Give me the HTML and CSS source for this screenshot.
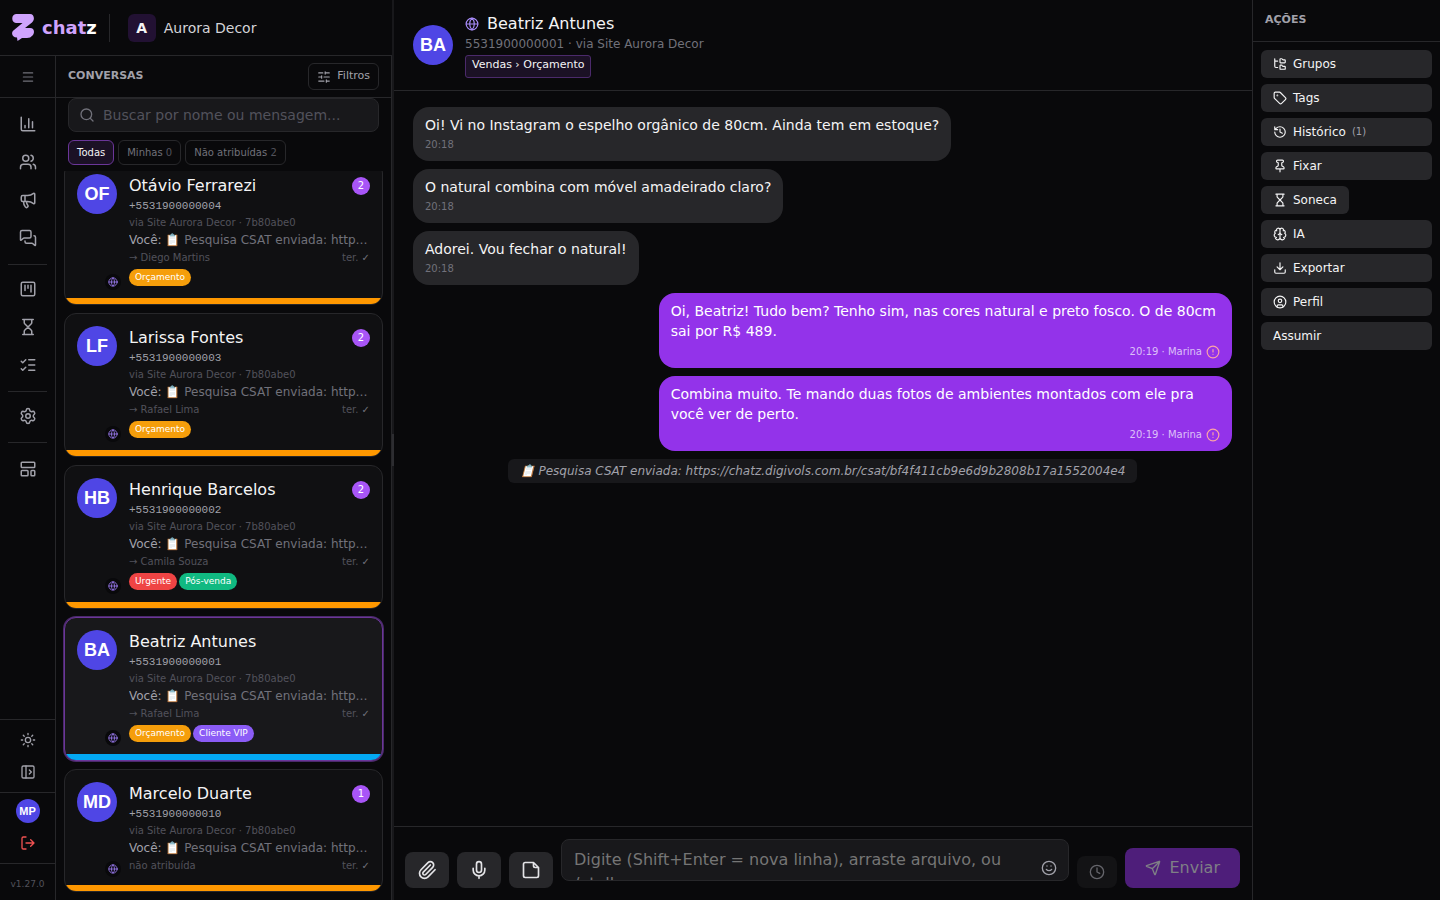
FILE: index.html
```html
<!DOCTYPE html>
<html lang="pt-BR">
<head>
<meta charset="utf-8">
<title>chatz</title>
<link rel="stylesheet" href="styles.css">
</head>
<body>
<svg class="sprite" aria-hidden="true">
  <symbol id="globe" viewBox="0 0 24 24"><circle cx="12" cy="12" r="10"/><path d="M12 2a14.5 14.5 0 0 0 0 20 14.5 14.5 0 0 0 0-20M2 12h20"/></symbol>
  <symbol id="hourglass" viewBox="0 0 24 24"><path d="M5 22h14M5 2h14M17 22v-4.172a2 2 0 0 0-.586-1.414L12 12l-4.414 4.414A2 2 0 0 0 7 17.828V22M7 2v4.172a2 2 0 0 0 .586 1.414L12 12l4.414-4.414A2 2 0 0 0 17 6.172V2"/></symbol>
  <symbol id="alert" viewBox="0 0 24 24"><circle cx="12" cy="12" r="10"/><path d="M12 8v4M12 16h.01"/></symbol>
</svg>
<div class="app">
  <section class="left">
    <header class="brand">
      <svg class="logo" viewBox="0 0 22 27"><path d="M4 0H18C22.500 0 23 6 20 8.500L13 14H18C22.500 14 23 18.500 20.500 21.500Q18.500 24 15 24H10L5.500 27L5 23.500C0 23.500-1.500 18.500 2 16L10.500 9H4C-1 9-1 0 4 0Z" fill="#cfa3fd"/></svg>
      <span class="wordmark">chat<b>z</b></span>
      <span class="brand-line"></span>
      <span class="org-mark">A</span>
      <span class="org">Aurora Decor</span>
    </header>
    <div class="left-body">
      <nav class="rail" aria-label="Principal">
        <button class="menu" aria-label="Menu"><svg class="i14" viewBox="0 0 24 24"><path d="M4 5h16M4 12h16M4 19h16"/></svg></button>
        <div class="rail-main">
          <a href="#" aria-label="Relatórios"><svg class="i18" viewBox="0 0 24 24"><path d="M3 3v16a2 2 0 0 0 2 2h16M18 17V9M13 17V5M8 17v-3"/></svg></a>
          <a href="#" aria-label="Contatos"><svg class="i18" viewBox="0 0 24 24"><path d="M16 21v-2a4 4 0 0 0-4-4H6a4 4 0 0 0-4 4v2M16 3.128a4 4 0 0 1 0 7.744M22 21v-2a4 4 0 0 0-3-3.87"/><circle cx="9" cy="7" r="4"/></svg></a>
          <a href="#" aria-label="Campanhas"><svg class="i18" viewBox="0 0 24 24"><path d="M11 6a13 13 0 0 0 8.4-2.8A1 1 0 0 1 21 4v12a1 1 0 0 1-1.6.8A13 13 0 0 0 11 14H5a2 2 0 0 1-2-2V8a2 2 0 0 1 2-2zM6 14a12 12 0 0 0 2.4 7.2 2 2 0 0 0 3.2-2.4A8 8 0 0 1 10 14M8 6v8"/></svg></a>
          <a href="#" aria-label="Conversas"><svg class="i18" viewBox="0 0 24 24"><path d="M16 10a2 2 0 0 1-2 2H6.828a2 2 0 0 0-1.414.586l-2.202 2.202A.71.71 0 0 1 2 14.286V4a2 2 0 0 1 2-2h10a2 2 0 0 1 2 2zM20 9a2 2 0 0 1 2 2v10.286a.71.71 0 0 1-1.212.502l-2.202-2.202A2 2 0 0 0 17.172 19H10a2 2 0 0 1-2-2v-1"/></svg></a>
          <hr>
          <a href="#" aria-label="Kanban"><svg class="i18" viewBox="0 0 24 24"><rect x="3" y="3" width="18" height="18" rx="2"/><path d="M8 7v7M12 7v4M16 7v9"/></svg></a>
          <a href="#" aria-label="Sonecas"><svg class="i18"><use href="#hourglass"/></svg></a>
          <a href="#" aria-label="Tarefas"><svg class="i18" viewBox="0 0 24 24"><path d="M13 5h8M13 12h8M13 19h8M3 17l2 2 4-4M3 7l2 2 4-4"/></svg></a>
          <hr>
          <a href="#" aria-label="Configurações"><svg class="i18" viewBox="0 0 24 24"><path d="M9.671 4.136a2.34 2.34 0 0 1 4.659 0 2.34 2.34 0 0 0 3.319 1.915 2.34 2.34 0 0 1 2.33 4.033 2.34 2.34 0 0 0 0 3.831 2.34 2.34 0 0 1-2.33 4.033 2.34 2.34 0 0 0-3.319 1.915 2.34 2.34 0 0 1-4.659 0 2.34 2.34 0 0 0-3.32-1.915 2.34 2.34 0 0 1-2.33-4.033 2.34 2.34 0 0 0 0-3.831A2.34 2.34 0 0 1 6.35 6.051a2.34 2.34 0 0 0 3.319-1.915"/><circle cx="12" cy="12" r="3"/></svg></a>
          <hr class="last">
          <a href="#" aria-label="Modelos"><svg class="i18" viewBox="0 0 24 24"><rect x="3" y="3" width="18" height="7" rx="1"/><rect x="3" y="14" width="9" height="7" rx="1"/><rect x="16" y="14" width="5" height="7" rx="1"/></svg></a>
        </div>
        <div class="rail-group">
          <button aria-label="Tema"><svg class="i16" viewBox="0 0 24 24"><circle cx="12" cy="12" r="4"/><path d="M12 2v2M12 20v2M4.93 4.93l1.41 1.41M17.66 17.66l1.41 1.41M2 12h2M20 12h2M6.34 17.66l-1.41 1.41M19.07 4.93l-1.41 1.41"/></svg></button>
          <button aria-label="Expandir"><svg class="i16" viewBox="0 0 24 24"><rect x="3" y="3" width="18" height="18" rx="2"/><path d="M9 3v18M14 9l3 3-3 3"/></svg></button>
        </div>
        <div class="rail-group user">
          <span class="avatar small">MP</span>
          <button class="logout" aria-label="Sair"><svg class="i16" viewBox="0 0 24 24"><path d="M16 17l5-5-5-5M21 12H9M9 21H5a2 2 0 0 1-2-2V5a2 2 0 0 1 2-2h4"/></svg></button>
        </div>
        <div class="version">v1.27.0</div>
      </nav>
      <div class="inbox">
        <div class="inbox-head">
          <h2>CONVERSAS</h2>
          <button class="filters"><svg class="i14" viewBox="0 0 24 24"><path d="M10 5H3M12 19H3M14 3v4M16 17v4M21 12h-9M21 19h-5M21 5h-7M8 10v4M8 12H3"/></svg><span>Filtros</span></button>
        </div>
        <div class="inbox-tools">
          <label class="search"><svg class="i16" viewBox="0 0 24 24"><path d="M21 21l-4.34-4.34"/><circle cx="11" cy="11" r="8"/></svg><input type="search" aria-label="Buscar" placeholder="Buscar por nome ou mensagem..."></label>
          <div class="chips">
            <button class="chip on">Todas</button>
            <button class="chip">Minhas <span>0</span></button>
            <button class="chip">Não atribuídas <span>2</span></button>
          </div>
        </div>
        <div class="list">
          <a href="#" class="card">
            <div class="card-row">
              <div class="face"><span class="avatar">OF</span><span class="channel"><svg class="i10"><use href="#globe"/></svg></span></div>
              <div class="info">
                <div class="top"><span class="name">Otávio Ferrarezi</span><span class="count">2</span></div>
                <div class="phone">+5531900000004</div>
                <div class="via">via Site Aurora Decor · 7b80abe0</div>
                <div class="preview"><span>Você:</span> 📋 Pesquisa CSAT enviada: https://</div>
                <div class="foot"><span>→ Diego Martins</span><span>ter. <i>✓</i></span></div>
                <div class="tags"><span class="tag amber">Orçamento</span></div>
              </div>
            </div>
            <div class="bar"></div>
          </a>
          <a href="#" class="card">
            <div class="card-row">
              <div class="face"><span class="avatar">LF</span><span class="channel"><svg class="i10"><use href="#globe"/></svg></span></div>
              <div class="info">
                <div class="top"><span class="name">Larissa Fontes</span><span class="count">2</span></div>
                <div class="phone">+5531900000003</div>
                <div class="via">via Site Aurora Decor · 7b80abe0</div>
                <div class="preview"><span>Você:</span> 📋 Pesquisa CSAT enviada: https://</div>
                <div class="foot"><span>→ Rafael Lima</span><span>ter. <i>✓</i></span></div>
                <div class="tags"><span class="tag amber">Orçamento</span></div>
              </div>
            </div>
            <div class="bar"></div>
          </a>
          <a href="#" class="card">
            <div class="card-row">
              <div class="face"><span class="avatar">HB</span><span class="channel"><svg class="i10"><use href="#globe"/></svg></span></div>
              <div class="info">
                <div class="top"><span class="name">Henrique Barcelos</span><span class="count">2</span></div>
                <div class="phone">+5531900000002</div>
                <div class="via">via Site Aurora Decor · 7b80abe0</div>
                <div class="preview"><span>Você:</span> 📋 Pesquisa CSAT enviada: https://</div>
                <div class="foot"><span>→ Camila Souza</span><span>ter. <i>✓</i></span></div>
                <div class="tags"><span class="tag red">Urgente</span><span class="tag green">Pós-venda</span></div>
              </div>
            </div>
            <div class="bar"></div>
          </a>
          <a href="#" class="card active">
            <div class="card-row">
              <div class="face"><span class="avatar">BA</span><span class="channel"><svg class="i10"><use href="#globe"/></svg></span></div>
              <div class="info">
                <div class="top"><span class="name">Beatriz Antunes</span></div>
                <div class="phone">+5531900000001</div>
                <div class="via">via Site Aurora Decor · 7b80abe0</div>
                <div class="preview"><span>Você:</span> 📋 Pesquisa CSAT enviada: https://</div>
                <div class="foot"><span>→ Rafael Lima</span><span>ter. <i>✓</i></span></div>
                <div class="tags"><span class="tag amber">Orçamento</span><span class="tag violet">Cliente VIP</span></div>
              </div>
            </div>
            <div class="bar blue"></div>
          </a>
          <a href="#" class="card">
            <div class="card-row">
              <div class="face"><span class="avatar">MD</span><span class="channel"><svg class="i10"><use href="#globe"/></svg></span></div>
              <div class="info">
                <div class="top"><span class="name">Marcelo Duarte</span><span class="count">1</span></div>
                <div class="phone">+5531900000010</div>
                <div class="via">via Site Aurora Decor · 7b80abe0</div>
                <div class="preview"><span>Você:</span> 📋 Pesquisa CSAT enviada: https://</div>
                <div class="foot"><span>não atribuída</span><span>ter. <i>✓</i></span></div>
              </div>
            </div>
            <div class="bar"></div>
          </a>
        </div>
      </div>
    </div>
  </section>
  <div class="resizer"><span></span></div>
  <main class="chat">
    <header class="chat-head">
      <span class="avatar">BA</span>
      <div>
        <h1><svg class="i14"><use href="#globe"/></svg>Beatriz Antunes</h1>
        <p>5531900000001 · via Site Aurora Decor</p>
        <span class="stage">Vendas › Orçamento</span>
      </div>
    </header>
    <div class="messages">
      <div class="msg">Oi! Vi no Instagram o espelho orgânico de 80cm. Ainda tem em estoque?<div class="meta">20:18</div></div>
      <div class="msg">O natural combina com móvel amadeirado claro?<div class="meta">20:18</div></div>
      <div class="msg">Adorei. Vou fechar o natural!<div class="meta">20:18</div></div>
      <div class="msg out">Oi, Beatriz! Tudo bem? Tenho sim, nas cores natural e preto fosco. O de 80cm sai por R$ 489.<div class="meta">20:19 · Marina<svg class="i14"><use href="#alert"/></svg></div></div>
      <div class="msg out">Combina muito. Te mando duas fotos de ambientes montados com ele pra você ver de perto.<div class="meta">20:19 · Marina<svg class="i14"><use href="#alert"/></svg></div></div>
      <div class="note">📋 Pesquisa CSAT enviada: https://chatz.digivols.com.br/csat/bf4f411cb9e6d9b2808b17a1552004e4</div>
    </div>
    <form class="composer">
      <button type="button" class="tool" aria-label="Anexar"><svg class="i20" viewBox="0 0 24 24"><path d="M16 6l-8.414 8.586a2 2 0 0 0 2.829 2.829l8.414-8.586a4 4 0 1 0-5.657-5.657l-8.379 8.551a6 6 0 1 0 8.485 8.485l8.379-8.551"/></svg></button>
      <button type="button" class="tool" aria-label="Gravar áudio"><svg class="i20" viewBox="0 0 24 24"><path d="M12 19v3M19 10v2a7 7 0 0 1-14 0v-2"/><rect x="9" y="2" width="6" height="13" rx="3"/></svg></button>
      <button type="button" class="tool" aria-label="Nota"><svg class="i20" viewBox="0 0 24 24"><path d="M15 3H5a2 2 0 0 0-2 2v14a2 2 0 0 0 2 2h14a2 2 0 0 0 2-2V9ZM15 3v4a2 2 0 0 0 2 2h4"/></svg></button>
      <div class="field">
        <textarea aria-label="Mensagem" placeholder="Digite (Shift+Enter = nova linha), arraste arquivo, ou /atalho"></textarea>
        <button type="button" class="emoji" aria-label="Emoji"><svg class="i16" viewBox="0 0 24 24"><circle cx="12" cy="12" r="10"/><path d="M8 14s1.500 2 4 2 4-2 4-2M9 9h.01M15 9h.01"/></svg></button>
      </div>
      <button type="button" class="later" aria-label="Agendar" disabled><svg class="i16" viewBox="0 0 24 24"><circle cx="12" cy="12" r="10"/><path d="M12 6v6l4 2"/></svg></button>
      <button class="send" disabled><svg class="i16" viewBox="0 0 24 24"><path d="M14.536 21.686a.5.5 0 0 0 .937-.024l6.500-19a.496.496 0 0 0-.635-.635l-19 6.500a.5.5 0 0 0-.024.937l7.930 3.180a2 2 0 0 1 1.112 1.110zM21.854 2.147l-10.940 10.939"/></svg>Enviar</button>
    </form>
  </main>
  <aside class="actions">
    <h2>AÇÕES</h2>
    <div class="action-list">
      <button><svg class="i14" viewBox="0 0 24 24"><path d="M20 10a1 1 0 0 0 1-1V6a1 1 0 0 0-1-1h-2.500a1 1 0 0 1-.8-.4l-.9-1.200A1 1 0 0 0 15 3h-2a1 1 0 0 0-1 1v5a1 1 0 0 0 1 1ZM20 21a1 1 0 0 0 1-1v-3a1 1 0 0 0-1-1h-2.900a1 1 0 0 1-.88-.55l-.42-.85a1 1 0 0 0-.92-.6H13a1 1 0 0 0-1 1v5a1 1 0 0 0 1 1ZM3 5a2 2 0 0 0 2 2h3M3 3v13a2 2 0 0 0 2 2h3"/></svg>Grupos</button>
      <button><svg class="i14" viewBox="0 0 24 24"><path d="M12.586 2.586A2 2 0 0 0 11.172 2H4a2 2 0 0 0-2 2v7.172a2 2 0 0 0 .586 1.414l8.704 8.704a2.426 2.426 0 0 0 3.420 0l6.580-6.580a2.426 2.426 0 0 0 0-3.420z"/><circle cx="7.500" cy="7.500" r=".5"/></svg>Tags</button>
      <button><svg class="i14" viewBox="0 0 24 24"><path d="M3 12a9 9 0 1 0 9-9 9.750 9.750 0 0 0-6.740 2.740L3 8M3 3v5h5M12 7v5l4 2"/></svg>Histórico<small>(1)</small></button>
      <button><svg class="i14" viewBox="0 0 24 24"><path d="M12 17v5M9 10.760a2 2 0 0 1-1.110 1.790l-1.780.9A2 2 0 0 0 5 15.240V16a1 1 0 0 0 1 1h12a1 1 0 0 0 1-1v-.76a2 2 0 0 0-1.110-1.790l-1.780-.9A2 2 0 0 1 15 10.760V7a1 1 0 0 1 1-1 2 2 0 0 0 0-4H8a2 2 0 0 0 0 4 1 1 0 0 1 1 1z"/></svg>Fixar</button>
      <button class="fit"><svg class="i14"><use href="#hourglass"/></svg>Soneca</button>
      <button><svg class="i14" viewBox="0 0 24 24"><path d="M12 18V5M15 13a4.170 4.170 0 0 1-3-4 4.170 4.170 0 0 1-3 4M17.598 6.500A3 3 0 1 0 12 5a3 3 0 1 0-5.598 1.500M17.997 5.125a4 4 0 0 1 2.526 5.770M18 18a4 4 0 0 0 2-7.464M19.967 17.483A4 4 0 1 1 12 18a4 4 0 1 1-7.967-.517M6 18a4 4 0 0 1-2-7.464M6.003 5.125a4 4 0 0 0-2.526 5.770"/></svg>IA</button>
      <button><svg class="i14" viewBox="0 0 24 24"><path d="M12 15V3M21 15v4a2 2 0 0 1-2 2H5a2 2 0 0 1-2-2v-4M7 10l5 5 5-5"/></svg>Exportar</button>
      <button><svg class="i14" viewBox="0 0 24 24"><circle cx="12" cy="12" r="10"/><circle cx="12" cy="10" r="3"/><path d="M7 20.662V19a2 2 0 0 1 2-2h6a2 2 0 0 1 2 2v1.662"/></svg>Perfil</button>
      <button>Assumir</button>
    </div>
  </aside>
</div>
</body>
</html>
```
FILE: styles.css
```css
* { box-sizing: border-box; }
body {
  margin: 0;
  background: #09090b;
  color: #f4f4f5;
  font-family: "DejaVu Sans", sans-serif;
  font-size: 14px;
  line-height: 20px;
}
button, input, textarea { font: inherit; color: inherit; }
button { border: 0; padding: 0; background: none; }
a { color: inherit; text-decoration: none; }
h1, h2, p { margin: 0; }
svg { flex: none; fill: none; stroke: currentColor; stroke-width: 2; stroke-linecap: round; stroke-linejoin: round; }
.sprite { position: absolute; width: 0; height: 0; }
.i10 { width: 10px; height: 10px; }
.i14 { width: 14px; height: 14px; }
.i16 { width: 16px; height: 16px; }
.i18 { width: 18px; height: 18px; }
.i20 { width: 20px; height: 20px; }

.app { display: grid; grid-template-columns: 392px 1px minmax(0, 1fr) 188px; height: 100vh; overflow: hidden; }
.left { display: flex; flex-direction: column; min-height: 0; }
.brand { display: flex; align-items: center; height: 56px; padding: 0 12px; border-bottom: 1px solid #27272a; }
.logo { width: 22px; height: 27px; stroke: none; }
.wordmark { margin-left: 8px; color: #cfa3fd; font-size: 18px; font-weight: 700; }
.wordmark b { color: #fff; }
.brand-line { width: 1px; height: 28px; margin: 0 18px 0 12px; background: #27272a; }
.org-mark { display: grid; place-items: center; width: 28px; height: 28px; border-radius: 6px; background: #221133; font-weight: 700; }
.org { margin-left: 8px; color: #d4d4d8; }
.left-body { display: flex; flex: 1; min-height: 0; border-right: 1px solid #27272a; }

.rail { display: flex; flex-direction: column; flex: none; width: 56px; border-right: 1px solid #27272a; color: #a1a1aa; }
.menu { display: grid; place-items: center; height: 42px; border-bottom: 1px solid #27272a; color: #71717a; }
.rail-main { display: flex; flex: 1; flex-direction: column; gap: 2px; padding: 8px; }
.rail-main a { display: grid; place-items: center; height: 36px; }
.rail-main hr { width: 100%; height: 1px; margin: 6px 0 4px; border: 0; background: #27272a; }
.rail-main .last { margin-bottom: 6px; }
.rail-group { display: flex; flex-direction: column; align-items: center; gap: 4px; padding: 6px 0; border-top: 1px solid #27272a; }
.rail-group button { display: grid; place-items: center; width: 28px; height: 28px; }
.rail-group.user { gap: 6px; }
.rail-group .logout { color: #f05252; }
.version { height: 37px; padding-top: 10px; border-top: 1px solid #27272a; color: #52525b; font-size: 9px; text-align: center; }

.avatar { display: grid; place-items: center; flex: none; width: 40px; height: 40px; border-radius: 50%; background: #4f46e5; color: #fff; font: 700 18px "Liberation Sans", sans-serif; }
.avatar.small { width: 24px; height: 24px; font-size: 11px; }

.inbox { display: flex; flex: 1; flex-direction: column; min-width: 0; }
.inbox-head { display: flex; align-items: center; justify-content: space-between; height: 42px; padding: 0 12px; border-bottom: 1px solid #27272a; }
h2 { color: #a1a1aa; font-size: 11px; font-weight: 700; line-height: 16px; }
.inbox-head h2 { margin-bottom: 2px; }
.filters { display: flex; align-items: center; gap: 6px; height: 27px; padding: 0 8px; border: 1px solid #27272a; border-radius: 6px; color: #a1a1aa; font-size: 11px; }
.filters span { margin-bottom: 2px; }
.inbox-tools { padding: 0 12px 6px; }
.search { display: flex; align-items: center; gap: 8px; height: 34px; padding: 0 10px; border: 1px solid #27272a; border-radius: 8px; background: #18181b; color: #71717a; }
.search input { flex: 1; min-width: 0; padding: 0; border: 0; outline: 0; background: none; }
.search input::placeholder { color: #52525b; }
.chips { display: flex; gap: 4px; margin-top: 8px; }
.chip { height: 25px; padding: 0 8px; border: 1px solid #27272a; border-radius: 6px; color: #71717a; font-size: 10px; line-height: 16px; }
.chip span { color: #52525b; }
.chip.on { border-color: #6b3699; background: #1b1125; color: #f4f4f5; }

.list { display: flex; flex: 1; flex-direction: column; justify-content: flex-end; gap: 8px; min-height: 0; padding: 0 8px 8px; overflow: hidden; }
.card { flex: none; overflow: hidden; border: 1px solid #27272a; border-radius: 12px; background: #101012; }
.card.active { border-color: #6b3699; background: #18181b; box-shadow: 0 0 0 1px #4b2a6b; }
.card-row { display: flex; gap: 12px; padding: 12px; }
.face { position: relative; }
.channel { position: absolute; right: -4px; bottom: -4px; display: grid; place-items: center; width: 16px; height: 16px; border-radius: 50%; background: #09090b; color: #9b7bf0; }
.info { flex: 1; min-width: 0; }
.top { display: flex; align-items: center; justify-content: space-between; height: 24px; }
.name { font-size: 16px; }
.count { display: grid; place-items: center; width: 18px; height: 18px; border-radius: 50%; background: #a855f7; color: #fff; font-size: 10px; line-height: 16px; }
.phone { color: #a1a1aa; font: 11px/16px "Liberation Mono", monospace; }
.via { color: #52525b; font-size: 10px; line-height: 17px; }
.preview { overflow: hidden; height: 18px; color: #71717a; font-size: 12px; line-height: 18px; text-overflow: ellipsis; white-space: nowrap; }
.preview span { color: #a1a1aa; }
.foot { display: flex; justify-content: space-between; height: 16px; color: #52525b; font-size: 10px; line-height: 18px; }
.foot i { color: #71717a; font-style: normal; }
.tags { display: flex; gap: 2px; margin-top: 4px; }
.tag { height: 17px; padding: 0 6px; border-radius: 9px; color: #fff; font-size: 9px; line-height: 17px; }
.amber { background: #f59e0b; }
.red { background: #ef4444; }
.green { background: #10b981; }
.violet { background: #8b5cf6; }
.bar { height: 6px; background: #ff9800; }
.bar.blue { background: #03a9f4; }

.resizer { display: flex; z-index: 1; align-items: center; width: 2px; background: #18181b; }
.resizer span { width: 2px; height: 32px; background: #2d2d31; }

.chat { display: flex; flex-direction: column; min-height: 0; }
.chat-head { display: flex; align-items: center; gap: 12px; padding: 12px 20px; border-bottom: 1px solid #27272a; }
h1 { display: flex; align-items: center; gap: 8px; font-size: 16px; font-weight: 400; line-height: 24px; }
h1 svg { color: #a78bfa; }
.chat-head p { color: #71717a; font-size: 12px; line-height: 16px; }
.stage { display: block; width: fit-content; margin-top: 3px; padding: 1px 6px 4px; border: 1px solid #4b2a6b; border-radius: 3px; background: #1b1125; font-size: 11px; line-height: 16px; }
.messages { display: flex; flex: 1; flex-direction: column; align-items: flex-start; gap: 8px; min-height: 0; padding: 16px 20px; }
.msg { max-width: 70%; padding: 8px 12px; border-radius: 16px; background: #27272a; }
.meta { display: flex; align-items: center; margin-top: 2px; color: #71717a; font-size: 10px; line-height: 16px; }
.msg.out { align-self: flex-end; background: #9333ea; color: #fff; }
.out .meta { gap: 4px; justify-content: flex-end; height: 17px; color: #dcc0f8; }
.out .meta svg { color: #fca5a5; }
.note { align-self: center; padding: 2px 12px; border-radius: 6px; background: #18181b; color: #a1a1aa; font-size: 12px; font-style: italic; }

.composer { display: flex; align-items: flex-end; gap: 8px; padding: 12px; border-top: 1px solid #27272a; }
.tool { display: grid; place-items: center; width: 44px; height: 36px; border-radius: 8px; background: #27272a; color: #e4e4e7; }
.field { position: relative; flex: 1; height: 49px; }
.field textarea { display: block; width: 100%; height: 42px; padding: 8px 40px 8px 12px; overflow: hidden; border: 1px solid #27272a; border-radius: 8px; outline: 0; background: #18181b; font-size: 16px; line-height: 24px; resize: none; }
.field textarea::placeholder { color: #757575; }
.emoji { position: absolute; right: 12px; bottom: 12px; display: grid; color: #a1a1aa; }
.later { display: grid; place-items: center; width: 40px; height: 32px; border-radius: 8px; background: #131315; color: #65656b; }
.send { display: flex; align-items: center; gap: 8px; height: 40px; padding: 0 20px; border-radius: 8px; background: #4e1e7a; color: #7f7f86; font-size: 16px; }

.actions { border-left: 1px solid #27272a; }
.actions h2 { height: 42px; padding: 12px; border-bottom: 1px solid #27272a; }
.action-list { display: flex; flex-direction: column; gap: 6px; padding: 8px; }
.action-list button { display: flex; align-items: center; gap: 6px; height: 28px; padding: 0 12px; border-radius: 6px; background: #27272a; font-size: 12px; line-height: 16px; }
.action-list .fit { align-self: flex-start; }
.action-list small { color: #a1a1aa; font-size: 10px; }
```
